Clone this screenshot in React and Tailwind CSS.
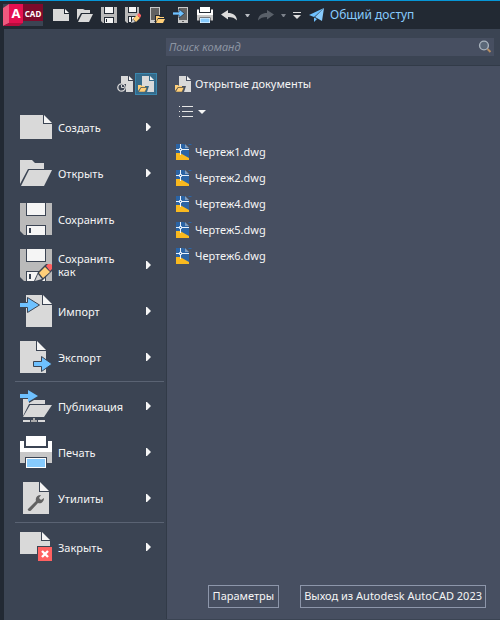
import React from "react";

const PAPER = "#d9d9d9";
const FOLD = "#f5f5f5";
const BG = "#3b4453";
const BLUE = "#6ec1ff";

function Icon({ size = 32, box = 32, children }) {
  return (
    <svg width={size} height={size} viewBox={`0 0 ${box} ${box}`} className="shrink-0" aria-hidden="true">
      {children}
    </svg>
  );
}

/* ---------- large menu icons, 32 unit grid ---------- */

const NewIcon = () => (
  <Icon>
    <path fill={PAPER} d="M0 4H23V13H32V28H0Z" />
    <path fill={FOLD} d="M24 4L32 12H24Z" />
  </Icon>
);

const OpenIcon = () => (
  <Icon>
    <path fill={PAPER} d="M0 3H12L15 6H24V12H8L0 27Z" />
    <path fill={PAPER} d="M9 13H32L24 29H1Z" />
  </Icon>
);

const Floppy = () => (
  <>
    <path fill="#bababa" d="M0 0H32V32H4L0 28Z" />
    <path fill={BG} d="M6 0H26V13H6ZM6 22H26V32H6Z" />
    <path fill={FOLD} d="M7 0H25V12H7ZM7 23H25V32H7Z" />
    <path fill={BG} d="M9 25H11V30H9Z" />
  </>
);

const Pencil = () => (
  <>
    <path fill={BG} d="M14 32L18 23L26 15H30L32 17V22L22 32Z" />
    <path fill="#d0d0d0" d="M15 32L18 25L22 30Z" />
    <path fill="#ffcf79" d="M19 24L25 18L30 23L23 29Z" />
    <path fill="#ff6161" d="M26 17L28 15H31L32 16V20L30 22Z" />
  </>
);

const SaveIcon = () => <Icon><Floppy /></Icon>;
const SaveAsIcon = () => <Icon><Floppy /><Pencil /></Icon>;

const ImportIcon = () => (
  <Icon>
    <path fill={PAPER} d="M6 0H22V10H32V32H6Z" />
    <path fill={FOLD} d="M23 0L32 9H23Z" />
    <path fill={BLUE} stroke={BG} d="M-1 7.5H7.5V2.500L19.500 10L7.500 17.500V12.500H-1Z" />
  </Icon>
);

const ExportIcon = () => (
  <Icon>
    <path fill={PAPER} d="M0 0H16V10H26V32H0Z" />
    <path fill={FOLD} d="M17 0L26 9H17Z" />
    <path fill={BLUE} stroke={BG} d="M13.500 20.500H21.500V15.500L32 23L21.500 30.500V25.500H13.500Z" />
  </Icon>
);

const PublishIcon = () => (
  <Icon>
    <path fill={PAPER} d="M3 9H9V13L14 10H25V14H9L3 26Z" />
    <path fill={PAPER} d="M10 15H32L24 27H3Z" />
    <path fill={BLUE} d="M0 4H8V0L18 6L8 12V8H0Z" />
    <path fill={PAPER} d="M3 30H10V32H3ZM18 30H25V32H18Z" />
    <path fill="#aaaaaa" d="M13 28H15V30H17V32H11V30H13Z" />
  </Icon>
);

const Printer = () => (
  <>
    <path fill="#ffffff" d="M0 5H4V12H28V5H32V16H0Z" />
    <path fill="#c8c8c8" d="M0 16H32V27H27V21H5V27H0Z" />
    <path fill="#ffffff" d="M6 0H26V10H6ZM6 22H26V32H6Z" />
    <path fill="#87cbfd" d="M7 23H25V31H7Z" />
  </>
);

const PrintIcon = () => <Icon><Printer /></Icon>;

const UtilIcon = () => (
  <Icon>
    <path fill={PAPER} d="M3 0H19V10H29V32H3Z" />
    <path fill={FOLD} d="M20 0L29 9H20Z" />
    <path fill="#626262" d="M8 27L16 19C15 16 17 13 21 13L19 16L21 18L24 16C24 20 21 22 18 21L11 28.500C9 30 7 28 8 27Z" />
  </Icon>
);

const CloseIcon = () => (
  <Icon>
    <path fill={PAPER} d="M0 1H21V10H30V15H17V23H0Z" />
    <path fill={FOLD} d="M22 1L30 9H22Z" />
    <path fill="#ff6161" d="M18 16H32V30H18Z" />
    <path stroke="#ffffff" strokeWidth="2.400" d="M22 20L28 26M28 20L22 26" />
  </Icon>
);

/* ---------- small icons, 16 unit grid ---------- */

const QNew = () => (
  <Icon size={16} box={16}>
    <path fill={PAPER} d="M0 2H11V7H16V14H0Z" />
    <path fill={FOLD} d="M12 2L16 6H12Z" />
  </Icon>
);
const QOpen = () => (
  <Icon size={16} box={16}>
    <path fill={PAPER} d="M0 2H6L8 3H13V6H4L0 13Z" />
    <path fill={PAPER} d="M5 7H16L12 15H1Z" />
  </Icon>
);
const QSave = () => (
  <Icon size={16} box={16}>
    <path fill="#bababa" d="M0 0H16V16H2L0 14Z" />
    <path fill="#222933" d="M3 0H13V7H3ZM3 10H13V16H3Z" />
    <path fill={FOLD} d="M4 0H12V6H4ZM4 11H12V16H4Z" />
    <path fill="#222933" d="M5 12H6V15H5Z" />
  </Icon>
);
const QSaveAs = () => (
  <Icon size={16} box={16}>
    <path fill="#bababa" d="M0 0H14V16H2L0 14Z" />
    <path fill="#222933" d="M3 0H12V6H3ZM3 9H14V16H3Z" />
    <path fill={FOLD} d="M4 0H11V5H4ZM4 10H6V15H4ZM7 10H10L7 13Z" />
    <path fill="#d0d0d0" d="M6 16L8 12L10 15Z" />
    <path fill="#ffcf79" d="M8 12L12 8L15 11L11 15Z" />
    <path fill="#ff6161" d="M12 8L14 6L16 8V9L15 11Z" />
  </Icon>
);
const Phone = ({ x }) => (
  <>
    <path fill="#c8c8c8" d={`M${x} 0H${x + 10}V16H${x}Z`} />
    <path fill="#626262" d={`M${x + 1} 1H${x + 9}V13H${x + 1}ZM${x + 4} 14H${x + 6}V15H${x + 4}Z`} />
  </>
);
const QPhoneOpen = () => (
  <Icon size={16} box={16}>
    <Phone x={1} />
    <path fill="#222933" d="M6 8H16V16H6Z" />
    <path fill="#ffcf79" d="M7 9H10L11 10H15V11H9L7 15Z" />
    <path fill="#ffcf79" d="M9 12H16L14 16H7Z" />
  </Icon>
);
const QPhoneSave = () => (
  <Icon size={16} box={16}>
    <Phone x={5} />
    <path fill={BLUE} stroke="#222933" strokeWidth=".7" d="M-1 5H6V2L11.500 6.500L6 11V8H-1Z" />
  </Icon>
);
const QPrint = () => <Icon size={16}><Printer /></Icon>;
const Curve = ({ flip }) => (
  <Icon size={16} box={16}>
    <path
      fill={flip ? "#596069" : "#dcdcdc"}
      transform={flip ? "matrix(-1 0 0 1 16 0)" : undefined}
      d="M0 7.500L7 3V6C12 6 15.500 8 16 13.500C14 11 11 10 7 10V12.500Z"
    />
  </Icon>
);

const RecentDocs = () => (
  <Icon size={16} box={16}>
    <path fill={PAPER} d="M4 0H11V5H16V16H9V8H4Z" />
    <path fill={FOLD} d="M12 0L16 4H12Z" />
    <circle cx="4.500" cy="11.500" r="3.700" fill={BG} stroke="#d9d9d9" strokeWidth="1.300" />
    <path fill="none" stroke="#d9d9d9" d="M4.500 9V11.500H7" />
  </Icon>
);
const OpenDocs = () => (
  <Icon size={16} box={16}>
    <path fill={PAPER} d="M4 0H11V5H16V16H9L11 10H4Z" />
    <path fill={FOLD} d="M12 0L16 4H12Z" />
    <path fill="#ffcf79" d="M0 9H3L4 10H7V11H3L0 15Z" />
    <path fill="#ffcf79" stroke="#4a4638" strokeWidth=".5" d="M3 11.500H9L7 16H.5Z" />
  </Icon>
);
const DwgIcon = () => (
  <Icon size={16} box={16}>
    <path fill="#2b64a5" d="M0 0H8L13 5V16H0Z" />
    <path fill="#7f9dbf" d="M9 0L13 4H9Z" />
    <path fill="#2b64a5" d="M12 0H16L15 1H13Z" />
    <path fill="#f9b91f" d="M0 9H4L13 14V16H0Z" />
    <path stroke="#e8f1fa" d="M4.500 0V11M0 5.500H13" />
    <path fill="#2b64a5" stroke="#e8f1fa" d="M3.500 4.500H5.500V6.500H3.500Z" />
  </Icon>
);

const Caret = ({ color = "#b8bcc2" }) => (
  <svg width="5" height="3" viewBox="0 0 5 3" aria-hidden="true"><path fill={color} d="M0 0H5L3 3H2Z" /></svg>
);

const groups = [
  [
    { label: "Создать", icon: NewIcon, sub: true },
    { label: "Открыть", icon: OpenIcon, sub: true },
    { label: "Сохранить", icon: SaveIcon },
    { label: "Сохранить как", icon: SaveAsIcon, sub: true },
    { label: "Импорт", icon: ImportIcon, sub: true },
    { label: "Экспорт", icon: ExportIcon, sub: true },
  ],
  [
    { label: "Публикация", icon: PublishIcon, sub: true },
    { label: "Печать", icon: PrintIcon, sub: true },
    { label: "Утилиты", icon: UtilIcon, sub: true },
  ],
  [{ label: "Закрыть", icon: CloseIcon, sub: true }],
];

const quick = [
  ["Новый", QNew],
  ["Открыть файл", QOpen],
  ["Сохранить файл", QSave],
  ["Сохранить файл как", QSaveAs],
  ["Открыть с мобильных", QPhoneOpen],
  ["Сохранить на мобильных", QPhoneSave],
  ["Печать файла", QPrint],
];

const files = ["Чертеж1.dwg", "Чертеж2.dwg", "Чертеж4.dwg", "Чертеж5.dwg", "Чертеж6.dwg"];

function TitleBar() {
  return (
    <header className="flex h-[29px] items-center border-t border-[#0696d7] bg-[#222933] pl-[3px]">
      <button aria-label="AutoCAD" className="flex h-[22px] w-10 shrink-0 bg-[#3b4453]">
        <svg width="20" height="22" viewBox="0 0 20 22" aria-hidden="true" className="-mr-5 shrink-0">
          <path fill="#f0597f" d="M0 4L6 0V19L0 22Z" />
          <path fill="#b80c3d" d="M6 19H20L16 22H0Z" />
        </svg>
        <span className="ml-[6px] flex h-[19px] w-[14px] shrink-0 items-center justify-center bg-[#e51050] text-[13px] font-bold leading-none text-white">A</span>
        <span className="flex h-[17px] w-5 shrink-0 items-center justify-center bg-[#7d0a2b] pt-[3px] text-[8px] font-bold leading-none text-white">CAD</span>
      </button>
      <div className="ml-[10px] flex items-center gap-2">
        {quick.map(([label, Glyph]) => (
          <button key={label} aria-label={label}><Glyph /></button>
        ))}
        <button aria-label="Отменить"><Curve /></button>
      </div>
      <button aria-label="Список отмены" className="ml-2"><Caret /></button>
      <button aria-label="Повторить" className="ml-2"><Curve flip /></button>
      <button aria-label="Список повтора" className="ml-[7px]"><Caret color="#7c828b" /></button>
      <button aria-label="Настройка панели" className="ml-[7px]">
        <svg width="8" height="7" viewBox="0 0 8 7" aria-hidden="true">
          <path fill="#dcdcdc" d="M0 0H8V1H0ZM0 3H8L4 7Z" />
        </svg>
      </button>
      <button className="ml-2 flex items-center gap-[5px] whitespace-nowrap text-[12px] leading-4 text-[#87cbfd]">
        <svg width="16" height="16" viewBox="0 0 16 16" aria-hidden="true">
          <path fill={BLUE} d="M0 8L15 1L5 10Z" />
          <path fill="#87cbfd" d="M6 10L15 1L13 14Z" />
          <path fill={BLUE} d="M5 10.500L8 12L5 15Z" />
        </svg>
        Общий доступ
      </button>
    </header>
  );
}

function Sidebar() {
  return (
    <aside className="flex w-[162px] shrink-0 flex-col">
      <div className="flex items-center justify-end gap-[2px] pr-[9px] pt-2">
        <button aria-label="Последние документы" className="flex"><RecentDocs /></button>
        <button aria-label="Открытые документы" className="flex size-[22px] items-center justify-center border border-[#3a87ae] bg-[#356b8b]">
          <OpenDocs />
        </button>
      </div>
      <nav className="pt-[9px]">
        {groups.map((items, i) => (
          <ul key={i} className={i ? "ml-[11px] mr-[2px] mt-px border-t border-[#5a6373] pt-px" : "ml-[11px] mr-[2px]"}>
            {items.map(({ label, icon: Glyph, sub }) => (
              <li key={label}>
                <button className="flex h-[46px] w-full items-center pl-[5px] pr-[13px] text-left">
                  <Glyph />
                  <span className="ml-[6px] mr-[14px] flex-1 leading-[13px]">{label}</span>
                  {sub && (
                    <svg width="5" height="8" viewBox="0 0 5 8" className="shrink-0" aria-hidden="true">
                      <path fill="#f5f5f5" d="M0 0H1L5 4L1 8H0Z" />
                    </svg>
                  )}
                </button>
              </li>
            ))}
          </ul>
        ))}
      </nav>
    </aside>
  );
}

export default function App() {
  return (
    <div className="flex min-h-screen flex-col bg-[#3b4453] font-['Noto_Sans','Open_Sans',sans-serif] text-[11px] text-[#f5f5f5]">
      <TitleBar />
      <div className="flex flex-1 flex-col border-l-4 border-[#222933]">
        <div className="ml-[162px] mr-[6px] mt-[9px] flex h-[18px] items-center bg-[#474f61] pl-[3px] pr-[2px]">
          <input
            type="search"
            aria-label="Поиск команд"
            placeholder="Поиск команд"
            className="min-w-0 flex-1 bg-transparent italic leading-4 outline-none placeholder:text-[#8c94a1]"
          />
          <svg width="14" height="14" viewBox="0 0 14 14" aria-hidden="true">
            <circle cx="6" cy="5.500" r="4.400" fill="#5b6878" stroke="#a9b3bd" strokeWidth="1.400" />
            <path stroke="#b58d62" strokeWidth="2" d="M9.500 9L12.500 12" />
          </svg>
        </div>
        <div className="mt-[9px] flex flex-1">
          <Sidebar />
          <main className="mb-px flex min-w-0 flex-1 flex-col border-l border-t border-[#323b48] bg-[#474f61]">
            <h1 className="flex items-center gap-[4px] pl-2 pt-[10px] leading-4"><OpenDocs />Открытые документы</h1>
            <button aria-label="Вид списка" className="ml-3 mt-[14px] flex items-center gap-[5px] self-start">
              <svg width="14" height="11" viewBox="0 0 14 11" aria-hidden="true">
                <path fill="#e6e6e6" d="M0 0H1V1H0ZM3 0H14V1H3ZM0 5H1V6H0ZM3 5H14V6H3ZM0 10H1V11H0ZM3 10H14V11H3Z" />
              </svg>
              <svg width="8" height="4" viewBox="0 0 8 4" aria-hidden="true"><path fill="#f5f5f5" d="M0 0H8L4 4Z" /></svg>
            </button>
            <ul className="mt-[22px] pl-[9px]">
              {files.map((name) => (
                <li key={name}>
                  <a href="#" className="flex h-[26px] items-center gap-[3px]"><DwgIcon />{name}</a>
                </li>
              ))}
            </ul>
            <div className="mb-[11px] mr-[14px] mt-auto flex justify-end gap-[21px]">
              <button className="h-[23px] whitespace-nowrap border border-[#8d96aa] px-1">Параметры</button>
              <button className="h-[23px] whitespace-nowrap border border-[#8d96aa] px-[3px]">Выход из Autodesk AutoCAD 2023</button>
            </div>
          </main>
        </div>
      </div>
    </div>
  );
}
